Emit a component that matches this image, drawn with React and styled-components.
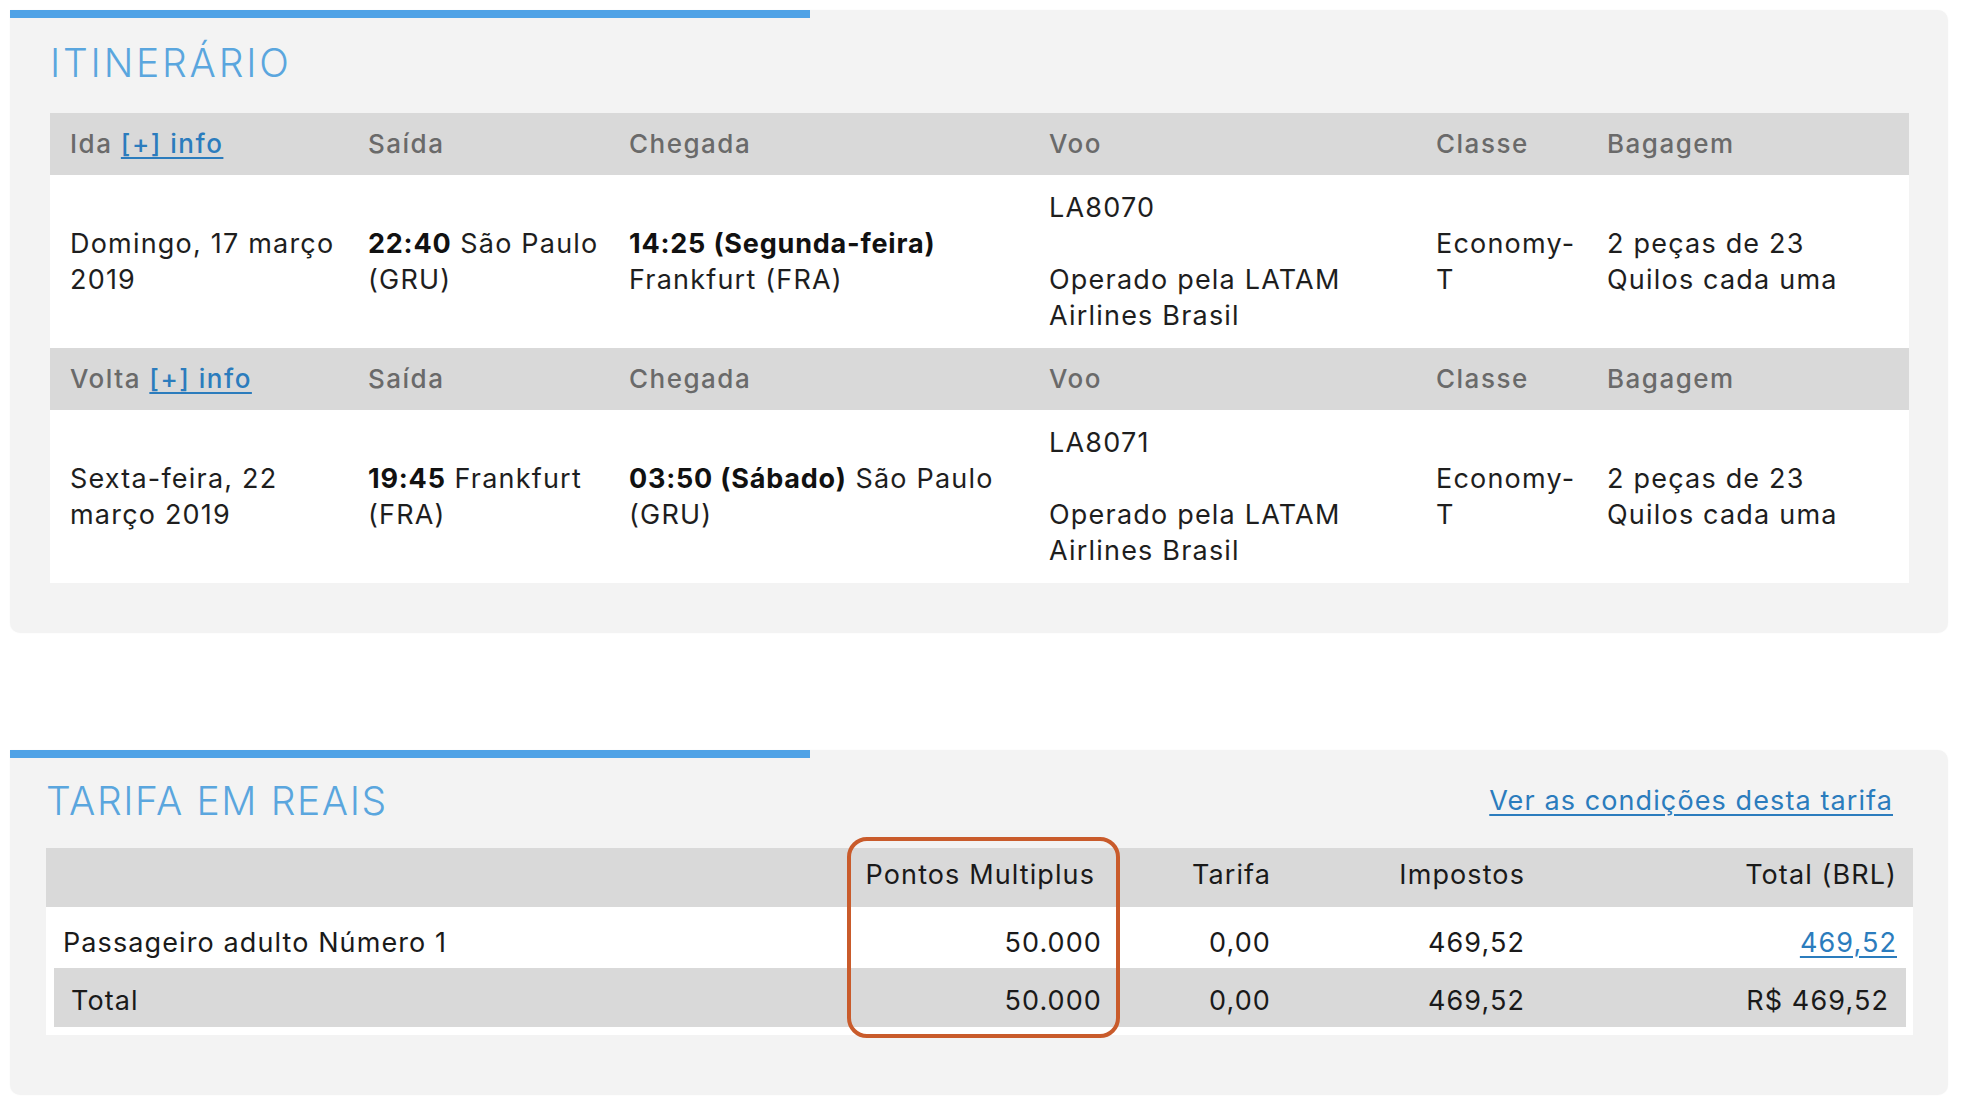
import React from 'react';
import styled, { createGlobalStyle } from 'styled-components';

const Global = createGlobalStyle`
  html, body { margin: 0; padding: 0; background: #ffffff; }
  body {
    font-family: Inter, "Noto Sans", "DejaVu Sans", sans-serif;
    color: #222222;
    -webkit-font-smoothing: antialiased;
  }
`;

const Page = styled.main`
  width: 1938px;
  padding: 10px 14px 15px 10px;
  display: flex;
  flex-direction: column;
  gap: 117px;
`;

const Panel = styled.section`
  background: #f3f3f3;
  border-radius: 0 10px 10px 10px;
  box-shadow: 0 0 2px rgba(0, 0, 0, 0.03);
`;

const AccentBar = styled.div`
  width: 800px;
  height: 8px;
  background: #4fa2e6;
`;

const PanelBody = styled.div`
  padding: ${(p) => p.$pad};
`;

const TitleRow = styled.div`
  display: flex;
  align-items: center;
  justify-content: space-between;
  height: 50px;
  padding-right: ${(p) => p.$right || 0}px;
  margin-bottom: ${(p) => p.$gap}px;
`;

const Title = styled.h2`
  margin: 0;
  font-size: 39px;
  font-weight: 300;
  letter-spacing: ${(p) => p.$spacing}px;
  line-height: 50px;
  color: #5aa6de;
  text-transform: uppercase;
`;

const TextLink = styled.a`
  color: #2b7cbd;
  text-decoration: underline;
  text-underline-offset: 4px;
  text-decoration-thickness: 2px;
  cursor: pointer;
`;

const ConditionsLink = styled(TextLink)`
  font-size: 27px;
  letter-spacing: 1.1px;
  line-height: 36px;
`;

/* ---------- Itinerary table ---------- */

const itinCols = '298px 261px 420px 387px 171px 1fr';

const ItinTable = styled.div`
  background: #ffffff;
  font-size: 27px;
  letter-spacing: 1.2px;
  line-height: 36px;
`;

const ItinHead = styled.div`
  display: grid;
  grid-template-columns: ${itinCols};
  align-items: center;
  height: 62px;
  background: #d9d9d9;
  color: #6a6a6a;
  font-size: 26px;
  font-weight: 500;
  letter-spacing: 1.5px;
`;

const ItinRow = styled.div`
  display: grid;
  grid-template-columns: ${itinCols};
  align-items: center;
  min-height: 173px;
  box-sizing: border-box;
  padding: 14px 0;
  color: #1e1e1e;
`;

const ItinCell = styled.div`
  padding: 0 ${(p) => p.$pr ?? 20}px 0 20px;
`;

const Strong = styled.b`
  font-weight: 700;
  color: #111111;
  letter-spacing: 0.8px;
`;

/* ---------- Fare table ---------- */

const fareCols = (first) => `${first}px 267px 169px 254px 1fr`;

const FareWrap = styled.div`
  position: relative;
  background: #ffffff;
  padding-bottom: 8px;
  font-size: 27px;
  letter-spacing: 1.1px;
  color: #1a1a1a;
`;

const FareRow = styled.div`
  display: grid;
  grid-template-columns: ${(p) => fareCols(p.$inset ? 796 : 804)};
  align-items: center;
  height: ${(p) => p.$h}px;
  box-sizing: border-box;
  padding-top: ${(p) => p.$pt || 0}px;
  padding-bottom: ${(p) => p.$pb || 0}px;
  margin: ${(p) => (p.$inset ? '0 7px 0 8px' : '0')};
  background: ${(p) => (p.$shade ? '#d9d9d9' : '#ffffff')};
`;

const FareCell = styled.div`
  text-align: ${(p) => (p.$left ? 'left' : 'right')};
  padding: ${(p) => (p.$left ? '0 0 0 17px' : `0 ${p.$pr ?? 15}px 0 0`)};
  white-space: nowrap;
`;

const Highlight = styled.div`
  position: absolute;
  left: 801px;
  top: -11px;
  width: 273px;
  height: 201px;
  box-sizing: border-box;
  border: 4px solid #c95b2b;
  border-radius: 20px;
  pointer-events: none;
`;

const legs = [
  {
    label: 'Ida',
    date: 'Domingo, 17 março 2019',
    depTime: '22:40',
    depPlace: ['São Paulo', '(GRU)'],
    arrBold: '14:25 (Segunda-feira)',
    arrPlace: ['Frankfurt', '(FRA)'],
    flight: 'LA8070',
  },
  {
    label: 'Volta',
    date: 'Sexta-feira, 22 março 2019',
    depTime: '19:45',
    depPlace: ['Frankfurt', '(FRA)'],
    arrBold: '03:50 (Sábado)',
    arrPlace: ['São Paulo', '(GRU)'],
    flight: 'LA8071',
  },
];

function Place({ parts }) {
  return (
    <>
      <span>{parts[0]}</span> <span>{parts[1]}</span>
    </>
  );
}

export default function App() {
  return (
    <>
      <Global />
      <Page>
        <Panel>
          <AccentBar />
          <PanelBody $pad="20px 39px 50px 40px">
            <TitleRow $gap={25}>
              <Title $spacing={2.8}>Itinerário</Title>
            </TitleRow>
            <ItinTable>
              {legs.map((leg) => (
                <React.Fragment key={leg.label}>
                  <ItinHead>
                    <ItinCell>
                      {leg.label} <TextLink>[+] info</TextLink>
                    </ItinCell>
                    <ItinCell>Saída</ItinCell>
                    <ItinCell>Chegada</ItinCell>
                    <ItinCell>Voo</ItinCell>
                    <ItinCell>Classe</ItinCell>
                    <ItinCell>Bagagem</ItinCell>
                  </ItinHead>
                  <ItinRow>
                    <ItinCell $pr={10}>{leg.date}</ItinCell>
                    <ItinCell $pr={6}>
                      <Strong>{leg.depTime}</Strong> <Place parts={leg.depPlace} />
                    </ItinCell>
                    <ItinCell $pr={10}>
                      <Strong>{leg.arrBold}</Strong> <Place parts={leg.arrPlace} />
                    </ItinCell>
                    <ItinCell>
                      {leg.flight}
                      <br />
                      <br />
                      Operado pela LATAM Airlines Brasil
                    </ItinCell>
                    <ItinCell $pr={6}>
                      Economy-
                      <wbr />T
                    </ItinCell>
                    <ItinCell $pr={60}>2 peças de 23 Quilos cada uma</ItinCell>
                  </ItinRow>
                </React.Fragment>
              ))}
            </ItinTable>
          </PanelBody>
        </Panel>

        <Panel>
          <AccentBar />
          <PanelBody $pad="18px 35px 60px 36px">
            <TitleRow $gap={22} $right={20}>
              <Title $spacing={1.6}>Tarifa em reais</Title>
              <ConditionsLink>Ver as condições desta tarifa</ConditionsLink>
            </TitleRow>
            <FareWrap>
              <FareRow $shade $h={59} $pb={6}>
                <FareCell $left />
                <FareCell $pr={22}>Pontos Multiplus</FareCell>
                <FareCell>Tarifa</FareCell>
                <FareCell>Impostos</FareCell>
                <FareCell $pr={16}>Total (BRL)</FareCell>
              </FareRow>
              <FareRow $h={61} $pt={10}>
                <FareCell $left>Passageiro adulto Número 1</FareCell>
                <FareCell>50.000</FareCell>
                <FareCell>0,00</FareCell>
                <FareCell>469,52</FareCell>
                <FareCell $pr={16}>
                  <TextLink>469,52</TextLink>
                </FareCell>
              </FareRow>
              <FareRow $shade $inset $h={59} $pt={6}>
                <FareCell $left>Total</FareCell>
                <FareCell>50.000</FareCell>
                <FareCell>0,00</FareCell>
                <FareCell>469,52</FareCell>
                <FareCell $pr={17}>R$ 469,52</FareCell>
              </FareRow>
              <Highlight />
            </FareWrap>
          </PanelBody>
        </Panel>
      </Page>
    </>
  );
}
